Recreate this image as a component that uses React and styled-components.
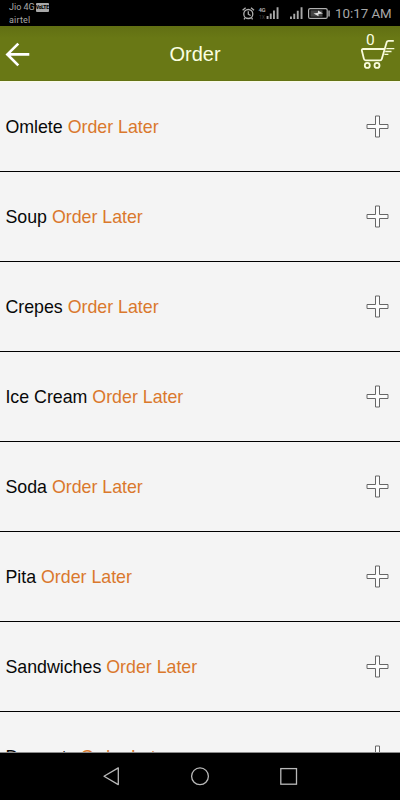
import React from "react";
import styled, { createGlobalStyle } from "styled-components";

const GlobalStyle = createGlobalStyle`
  * { box-sizing: border-box; }
  body { margin: 0; background: #000; }
`;

const Screen = styled.div`
  width: 400px;
  height: 800px;
  display: flex;
  flex-direction: column;
  overflow: hidden;
  background: #f4f4f4;
  font-family: "Liberation Sans", Arial, sans-serif;
`;

const StatusBar = styled.div`
  flex: none;
  height: 26px;
  background: #000;
  color: #a8a8a8;
  display: flex;
  justify-content: space-between;
  font-family: Roboto, sans-serif;
`;

const Carriers = styled.div`
  padding: 1px 0 0 9px;
  font-size: 9px;
  line-height: 13px;
`;

const CarrierLine = styled.div`
  display: flex;
  align-items: center;
  gap: 1px;
  letter-spacing: ${(p) => p.$spacing || "0"};
`;

const VolteBadge = styled.span`
  width: 13px;
  height: 9px;
  border-radius: 1px;
  background: #a8a8a8;
  color: #000;
  font-size: 5px;
  font-weight: 900;
  line-height: 9px;
  letter-spacing: -0.2px;
  text-align: center;
`;

const StatusRight = styled.div`
  width: 159px;
  display: flex;
`;

const Clock = styled.span`
  margin-left: 4px;
  font-size: 13.3px;
  line-height: 28px;
  white-space: nowrap;
`;

const Header = styled.header`
  flex: none;
  height: 56px;
  display: grid;
  grid-template-columns: 60px 1fr 70px;
  align-items: center;
  background: linear-gradient(#616f13 0, #697815 12px, #697815 54px, #5f6d14 55px, #fafbe8 55px);
  color: #fbffe2;
`;

const Title = styled.h1`
  margin: 0;
  font-size: 20px;
  font-weight: 400;
  line-height: 24px;
  text-align: center;
`;

const Cart = styled.div`
  position: relative;
  width: 38px;
  height: 56px;
  justify-self: end;
  margin-right: 2px;
`;

const CartCount = styled.span`
  position: absolute;
  left: 6px;
  top: 6px;
  font-family: Roboto, sans-serif;
  font-size: 15.5px;
  line-height: 17px;
`;

const Icon = styled.svg`
  display: block;
  flex: none;
  fill: none;
`;

const List = styled.main`
  flex: none;
  height: 671px;
  overflow: hidden;
  border-bottom: 1px solid #8c8c8c;
`;

const Row = styled.div`
  height: 90px;
  padding: 0 11px 0 5.4px;
  border-bottom: 1px solid #000;
  display: flex;
  align-items: center;
  justify-content: space-between;
`;

const Label = styled.span`
  color: #080808;
  font-size: 17.8px;
  line-height: 22px;
  white-space: nowrap;
`;

const Later = styled.span`
  color: #da782c;
`;

const NavBar = styled.nav`
  flex: 1;
  background: #000;
`;

const items = ["Omlete", "Soup", "Crepes", "Ice Cream", "Soda", "Pita", "Sandwiches", "Desserts"];

const StatusIcons = () => (
  <Icon width="90" height="26" viewBox="241 0 90 26">
    <g stroke="#b0b0b0" strokeWidth="1.3">
      <circle cx="248.3" cy="14" r="4.5" />
      <path d="M248.3 11.2v3l2.3 1.3M242.6 10.3l3-2.5M254 10.3l-3-2.5M245 18l-1 1.3M251.6 18l1 1.3" />
    </g>
    <g fill="#a8a8a8">
      <text x="258.5" y="12.3" fontSize="6" fontWeight="700" fontFamily="Roboto" textLength="7">4G</text>
      <text x="259" y="19" fontSize="5" fontFamily="Roboto" fill="#444" textLength="6">1X</text>
      <path d="M266.6 16h1.9v3h-1.9zM269.8 13.4h1.9V19h-1.9zM273 10.4h1.9V19H273zM276.6 7.2h1.9V19h-1.9z" />
      <path d="M290 16.6h1.9v2.4H290zM293.3 13.7h1.9V19h-1.9zM296.8 10.7h1.9V19h-1.9zM300.6 7.2h1.9V19h-1.9z" />
    </g>
    <rect x="308.6" y="8.6" width="18.6" height="9.8" rx="1.5" stroke="#b0b0b0" strokeWidth="1.2" />
    <rect x="310.5" y="10.3" width="12" height="6.4" fill="#444" />
    <path d="M313.5 13.4l4.5-.6v-2.3l5 3-4.5.6v2.2z" fill="#ddd" />
    <path d="M328.3 10.5h1.5v6h-1.5z" fill="#a8a8a8" />
  </Icon>
);

const BackArrow = () => (
  <Icon width="36" height="56" viewBox="0 26 36 56" stroke="#fff" strokeWidth="2.7">
    <path d="M29.3 54.4H7.5M18.3 43.6L7.4 54.4L18.3 65.4" />
  </Icon>
);

const CartIcon = () => (
  <Icon width="38" height="56" viewBox="360 26 38 56" stroke="#f8fbdc" strokeWidth="1.8" strokeLinejoin="round">
    <path d="M393.8 40.9h-5.2q-1.5 0-2 1.5L381.8 59q-.4 1.3-1.7 1.3h-14.4q-1.5 0-1.8-1.4l-2-8.2q-.5-1.7 1.3-1.7H384" />
    <path d="M386.3 48.6h8M385.2 51.5h6.3M384.4 54.3h4" strokeWidth="1.3" />
    <circle cx="367.3" cy="65.4" r="2.5" />
    <circle cx="377" cy="65.4" r="2.5" />
  </Icon>
);

const Plus = () => (
  <Icon width="23" height="23" viewBox="0 0 23 23">
    <path d="M9.5 1h4v8.5H22v4h-8.5V22h-4v-8.5H1v-4h8.5z" fill="#fcfcfc" stroke="#666" strokeWidth="1" />
  </Icon>
);

const NavIcons = () => (
  <Icon width="400" height="47" viewBox="0 753 400 47" stroke="#b9b9b9" strokeWidth="1.3">
    <path d="M104 776.3l14.3-8.4v16.7z" strokeLinejoin="round" />
    <circle cx="200" cy="776.3" r="8.4" />
    <rect x="280.8" y="768.6" width="15.7" height="15.6" />
  </Icon>
);

export default function App() {
  return (
    <Screen>
      <GlobalStyle />
      <StatusBar>
        <Carriers>
          <CarrierLine>Jio 4G <VolteBadge>VoLTE</VolteBadge></CarrierLine>
          <CarrierLine $spacing="0.2px">airtel</CarrierLine>
        </Carriers>
        <StatusRight>
          <StatusIcons />
          <Clock>10:17 AM</Clock>
        </StatusRight>
      </StatusBar>
      <Header>
        <BackArrow />
        <Title>Order</Title>
        <Cart>
          <CartIcon />
          <CartCount>0</CartCount>
        </Cart>
      </Header>
      <List>
        {items.map((name) => (
          <Row key={name}>
            <Label>{name} <Later>Order Later</Later></Label>
            <Plus />
          </Row>
        ))}
      </List>
      <NavBar><NavIcons /></NavBar>
    </Screen>
  );
}
